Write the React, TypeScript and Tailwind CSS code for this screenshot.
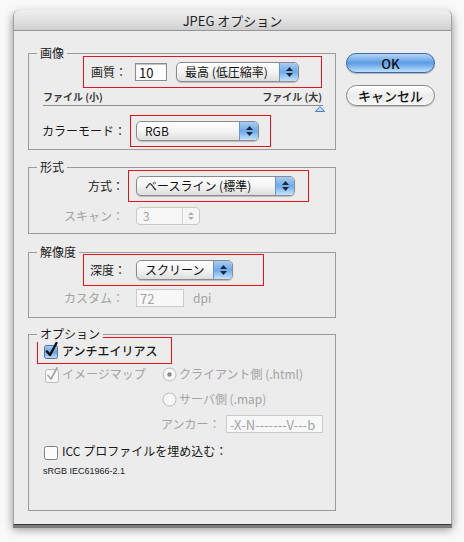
import React from 'react';

const label = 'text-[12px] leading-[16px] text-[#1a1a1a]';
const dim = 'text-[12px] leading-[16px] text-[#a3a3a3]';

function Group({ title, className, children }: { title: string; className?: string; children: React.ReactNode }) {
    return (
        <div className={`relative border border-[#9a9a9a] ${className ?? ''}`}>
            <span className="absolute left-[8px] -top-[9px] bg-[#ececec] px-[3px] text-[12px] leading-[16px] text-[#1a1a1a]">
                {title}
            </span>
            {children}
        </div>
    );
}

function Popup({ className, children }: { className: string; children: React.ReactNode }) {
    return (
        <div className={`flex h-[20px] overflow-hidden rounded-[5px] border border-[#8b8b8b] bg-linear-to-b from-white via-[#f4f4f4] to-[#dedede] shadow-[0_1px_1px_rgba(0,0,0,0.2)] ${className}`}>
            <div className="flex flex-1 items-center pl-[8px] text-[12px] leading-none text-[#111]">{children}</div>
            <div className="flex w-[19px] flex-col items-center justify-center gap-[2px] border-l border-[#6d93c0] bg-linear-to-b from-[#a8cdf3] via-[#6ea9e8] to-[#c6e4fd]">
                <svg width="7" height="4" viewBox="0 0 7 4"><path d="M3.5 0 L7 4 L0 4 Z" fill="#1d2a3a" /></svg>
                <svg width="7" height="4" viewBox="0 0 7 4"><path d="M0 0 L7 0 L3.5 4 Z" fill="#1d2a3a" /></svg>
            </div>
        </div>
    );
}

function Spinner() {
    return (
        <div className="flex h-[18px] w-[64px] overflow-hidden rounded-[4px] border border-[#c9c9c9] bg-[#f6f6f6]">
            <div className="flex flex-1 items-center pl-[6px] text-[12px] leading-none text-[#a3a3a3]">3</div>
            <div className="flex w-[17px] flex-col items-center justify-center gap-[2px] border-l border-[#d2d2d2]">
                <svg width="6" height="3" viewBox="0 0 6 3"><path d="M3 0 L6 3 L0 3 Z" fill="#b0b0b0" /></svg>
                <svg width="6" height="3" viewBox="0 0 6 3"><path d="M0 0 L6 0 L3 3 Z" fill="#b0b0b0" /></svg>
            </div>
        </div>
    );
}

function TextBox({ className, disabled, children }: { className: string; disabled?: boolean; children: React.ReactNode }) {
    return (
        <div
            className={`flex h-[18px] items-center overflow-hidden whitespace-nowrap px-[3px] text-[13px] leading-none ${
                disabled
                    ? 'border border-[#cbcbcb] bg-[#f7f7f7] text-[#a3a3a3]'
                    : 'border border-[#8c8c8c] bg-white text-[#111] shadow-[inset_0_1px_1px_rgba(0,0,0,0.25)]'
            } ${className}`}
        >
            {children}
        </div>
    );
}

function Check({ state }: { state: 'on' | 'off' | 'dim' }) {
    if (state === 'on') {
        return (
            <svg width="16" height="17" viewBox="0 0 16 17">
                <defs>
                    <linearGradient id="cb" x1="0" y1="0" x2="0" y2="1">
                        <stop offset="0" stopColor="#a9cdf2" />
                        <stop offset="0.5" stopColor="#6aa4e4" />
                        <stop offset="1" stopColor="#c0e0fb" />
                    </linearGradient>
                </defs>
                <rect x="1.5" y="3.5" width="13" height="13" rx="2" fill="url(#cb)" stroke="#4f74a3" />
                <path d="M4 9.5 L7 13 L13.5 1" fill="none" stroke="#101010" strokeWidth="2.4" strokeLinecap="round" strokeLinejoin="round" />
            </svg>
        );
    }
    return (
        <svg width="16" height="17" viewBox="0 0 16 17">
            <rect x="1.5" y="3.5" width="13" height="13" rx="2" fill={state === 'dim' ? '#f8f8f8' : '#fbfbfb'} stroke={state === 'dim' ? '#b9b9b9' : '#808080'} />
            {state === 'dim' && <path d="M4 9.5 L7 13 L13 2" fill="none" stroke="#a8a8a8" strokeWidth="1.8" strokeLinecap="round" strokeLinejoin="round" />}
        </svg>
    );
}

function Radio({ on }: { on?: boolean }) {
    return (
        <svg width="15" height="15" viewBox="0 0 15 15">
            <circle cx="7.5" cy="7.5" r="6.5" fill="#f8f8f8" stroke="#bcbcbc" />
            {on && <circle cx="7.5" cy="7.5" r="2.2" fill="#8a8a8a" />}
        </svg>
    );
}

export default function App() {
    return (
        <div className="h-[542px] w-[464px] overflow-hidden bg-[#f9f9f9] pl-[13px] pt-[10px] font-['Noto_Sans_CJK_JP','Noto_Sans',sans-serif]">
            <div className="flex h-[515px] w-[439px] flex-col rounded-t-[6px] border-x border-b border-x-[#a4a4a4] border-b-[#3a3a3a] bg-[#ececec] shadow-[0_3px_0_#7c7c7c,0_4px_10px_rgba(0,0,0,0.45)]">
                {/* title bar */}
                <div className="flex h-[21px] items-center justify-center rounded-t-[6px] border-b border-[#959595] bg-linear-to-b from-[#eeeeee] via-[#e2e2e2] to-[#cfcfcf] text-[13px] leading-none text-[#222]">
                    JPEG オプション
                </div>

                <div className="flex pl-[14px] pt-[22px]">
                    <div className="flex w-[308px] flex-col">
                        {/* 画像 */}
                        <Group title="画像" className="flex flex-col pb-[2px] pt-[2px]">
                            <div className="ml-[54px] flex h-[32px] w-[239px] items-center border border-[#e8121b]">
                                <span className={`w-[51px] pr-[8px] text-right ${label}`}>画質：</span>
                                <TextBox className="w-[32px]">10</TextBox>
                                <Popup className="ml-[9px] w-[123px]">最高 (低圧縮率)</Popup>
                            </div>
                            <div className="mt-[3px] flex h-[12px] items-center justify-between pl-[14px] pr-[13px] text-[10px] font-bold leading-none text-[#3a3a3a]">
                                <span>ファイル (小)</span>
                                <span>ファイル (大)</span>
                            </div>
                            <div className="ml-[14px] mt-[2px] h-[1px] w-[280px] bg-[#8e8e8e]" />
                            <div className="ml-[286px] h-[6px] w-[10px]">
                                <svg width="10" height="6" viewBox="0 0 10 6"><path d="M5 0.5 L9.5 5.5 L0.5 5.5 Z" fill="#c2ddf7" stroke="#4a7fc1" /></svg>
                            </div>
                            <div className="mt-[3px] flex items-center">
                                <span className={`w-[101px] pr-[4px] text-right ${label}`}>カラーモード：</span>
                                <div className="flex h-[32px] w-[141px] items-center border border-[#e8121b] pl-[5px]">
                                    <Popup className="w-[123px]">RGB</Popup>
                                </div>
                            </div>
                        </Group>

                        {/* 形式 */}
                        <Group title="形式" className="mt-[17px] flex flex-col pb-[8px] pt-[2px]">
                            <div className="flex items-center">
                                <span className={`w-[99px] pr-[4px] text-right ${label}`}>方式：</span>
                                <div className="flex h-[32px] w-[181px] items-center border border-[#e8121b] pl-[7px]">
                                    <Popup className="w-[159px]">ベースライン (標準)</Popup>
                                </div>
                            </div>
                            <div className="mt-[5px] flex items-center">
                                <span className={`w-[107px] pr-[12px] text-right ${dim}`}>スキャン：</span>
                                <Spinner />
                            </div>
                        </Group>

                        {/* 解像度 */}
                        <Group title="解像度" className="mt-[18px] flex flex-col pb-[10px] pt-[1px]">
                            <div className="ml-[54px] flex h-[32px] w-[181px] items-center border border-[#e8121b]">
                                <span className={`w-[52px] pr-[10px] text-right ${label}`}>深度：</span>
                                <Popup className="w-[97px]">スクリーン</Popup>
                            </div>
                            <div className="mt-[3px] flex items-center">
                                <span className={`w-[107px] pr-[12px] text-right ${dim}`}>カスタム：</span>
                                <TextBox disabled className="w-[48px]">72</TextBox>
                                <span className={`ml-[9px] ${dim}`}>dpi</span>
                            </div>
                        </Group>

                        {/* オプション */}
                        <Group title="オプション" className="mt-[16px] flex h-[177px] flex-col pt-[2px]">
                            <div className="ml-[8px] flex h-[27px] w-[135px] items-center border border-[#e8121b] pl-[5px]">
                                <Check state="on" />
                                <span className={`ml-[3px] font-medium ${label}`}>アンチエイリアス</span>
                            </div>
                            <div className="mt-[2px] flex h-[16px] items-center pl-[15px]">
                                <Check state="dim" />
                                <span className={`ml-[2px] w-[100px] ${dim}`}>イメージマップ</span>
                                <Radio on />
                                <span className={`ml-[2px] ${dim}`}>クライアント側 (.html)</span>
                            </div>
                            <div className="mt-[9px] flex h-[16px] items-center pl-[133px]">
                                <Radio />
                                <span className={`ml-[2px] ${dim}`}>サーバ側 (.map)</span>
                            </div>
                            <div className="mt-[8px] flex items-center pl-[132px]">
                                <span className={`w-[65px] ${dim}`}>アンカー：</span>
                                <TextBox disabled className="w-[97px] text-[12px]">-X-N-------V---b</TextBox>
                            </div>
                            <div className="mt-[10px] flex h-[16px] items-center pl-[14px]">
                                <Check state="off" />
                                <span className={`ml-[3px] ${label}`}>ICC プロファイルを埋め込む：</span>
                            </div>
                            <div className="mt-[5px] pl-[14px] font-['Liberation_Sans',sans-serif] text-[9px] leading-[14px] text-[#222]">
                                sRGB IEC61966-2.1
                            </div>
                        </Group>
                    </div>

                    {/* buttons */}
                    <div className="ml-[10px] flex w-[89px] flex-col">
                        <button className="flex h-[20px] items-center justify-center rounded-full border border-[#3c6aa8] bg-linear-to-b from-[#b5d6f6] via-[#5b9be4] to-[#bfe0fc] text-[13px] font-medium leading-none text-[#111] shadow-[0_1px_1px_rgba(0,0,0,0.25)]">
                            OK
                        </button>
                        <button className="mt-[12px] flex h-[21px] items-center justify-center rounded-full border border-[#8a8a8a] bg-linear-to-b from-white via-[#ececec] to-[#f7f7f7] text-[13px] font-medium leading-none text-[#111] shadow-[0_1px_1px_rgba(0,0,0,0.2)]">
                            キャンセル
                        </button>
                    </div>
                </div>
            </div>
        </div>
    );
}
